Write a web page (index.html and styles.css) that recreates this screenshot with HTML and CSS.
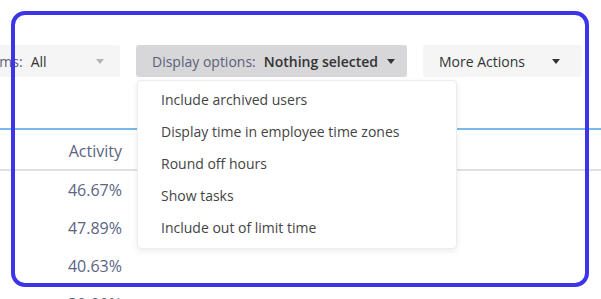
FILE: index.html
```html
<!DOCTYPE html>
<html lang="en">
<head>
    <meta charset="UTF-8">
    <title>Report - Display options</title>
    <link rel="stylesheet" href="styles.css">
</head>
<body>
    <div class="page">
        <div class="toolbar">
            <div class="filter-btn">
                <span class="label">Teams:</span>
                <span class="value">All</span>
                <span class="caret caret-light"></span>
            </div>
            <div class="filter-wrap">
                <div class="filter-btn active">
                    <span class="label">Display options:</span>
                    <span class="value strong">Nothing selected</span>
                    <span class="caret"></span>
                </div>
                <ul class="dropdown">
                    <li>Include archived users</li>
                    <li>Display time in employee time zones</li>
                    <li>Round off hours</li>
                    <li>Show tasks</li>
                    <li>Include out of limit time</li>
                </ul>
            </div>
            <div class="filter-btn actions">
                <span class="value">More Actions</span>
                <span class="caret"></span>
            </div>
        </div>

        <div class="report">
            <div class="report-head">
                <div class="cell">Activity</div>
            </div>
            <div class="report-row"><div class="cell">46.67%</div></div>
            <div class="report-row"><div class="cell">47.89%</div></div>
            <div class="report-row"><div class="cell">40.63%</div></div>
            <div class="report-row"><div class="cell">30.00%</div></div>
        </div>
    </div>

    <div class="highlight"></div>
</body>
</html>
```

FILE: styles.css
```css
* {
    margin: 0;
    padding: 0;
    box-sizing: border-box;
}

html, body {
    overflow: hidden;
}

body {
    font-family: "Open Sans", Arial, sans-serif;
    font-size: 14px;
    background: #fff;
    color: #444;
    width: 601px;
    height: 299px;
    position: relative;
}

.page {
    padding-top: 45px;
    height: 299px;
    overflow: hidden;
}

.toolbar {
    display: flex;
    gap: 16px;
    margin-left: -40px;
    height: 32px;
}

.filter-btn {
    display: flex;
    align-items: center;
    height: 32px;
    padding: 0 16px;
    background: #f5f5f5;
    border-radius: 3px;
    white-space: nowrap;
}

.filter-btn:first-child {
    width: 160px;
}

.filter-btn .label {
    color: #5b6078;
    margin-right: 8px;
}

.filter-btn .value {
    color: #333;
}

.filter-btn .strong {
    font-weight: 600;
}

.caret {
    width: 0;
    height: 0;
    border-left: 4px solid transparent;
    border-right: 4px solid transparent;
    border-top: 5px solid #333;
    margin-left: auto;
}

.caret-light {
    border-top-color: #b5b5b5;
}

.filter-wrap {
    position: relative;
}

.filter-btn.active {
    width: 271px;
    background: #d7d7d9;
}

.filter-btn.active .caret {
    margin-left: 9px;
}

.filter-btn.actions {
    width: 159px;
    padding-right: 22px;
}

.dropdown {
    position: absolute;
    top: 35px;
    left: 1px;
    width: 320px;
    list-style: none;
    padding: 3px 0 4px;
    background: #fff;
    border: 1px solid #ececec;
    border-radius: 4px;
    box-shadow: 0 2px 6px rgba(0,0,0,0.08);
    z-index: 5;
}

.dropdown li {
    height: 32px;
    line-height: 32px;
    padding-left: 23px;
    color: #444;
    white-space: nowrap;
}

.report {
    margin-top: 51px;
    color: #5a6483;
    font-size: 16px;
}

.report-head {
    border-top: 2px solid #7ab7ea;
    border-bottom: 2px solid #e0e0e0;
    height: 43px;
    padding-top: 2px;
    display: flex;
    align-items: center;
}

.report-row {
    height: 38px;
    display: flex;
    align-items: center;
}

.cell {
    width: 122px;
    text-align: right;
}

.highlight {
    position: absolute;
    left: 11px;
    top: 11px;
    width: 578px;
    height: 276px;
    border: 4px solid #3b34e8;
    border-radius: 14px;
    z-index: 10;
}
```
